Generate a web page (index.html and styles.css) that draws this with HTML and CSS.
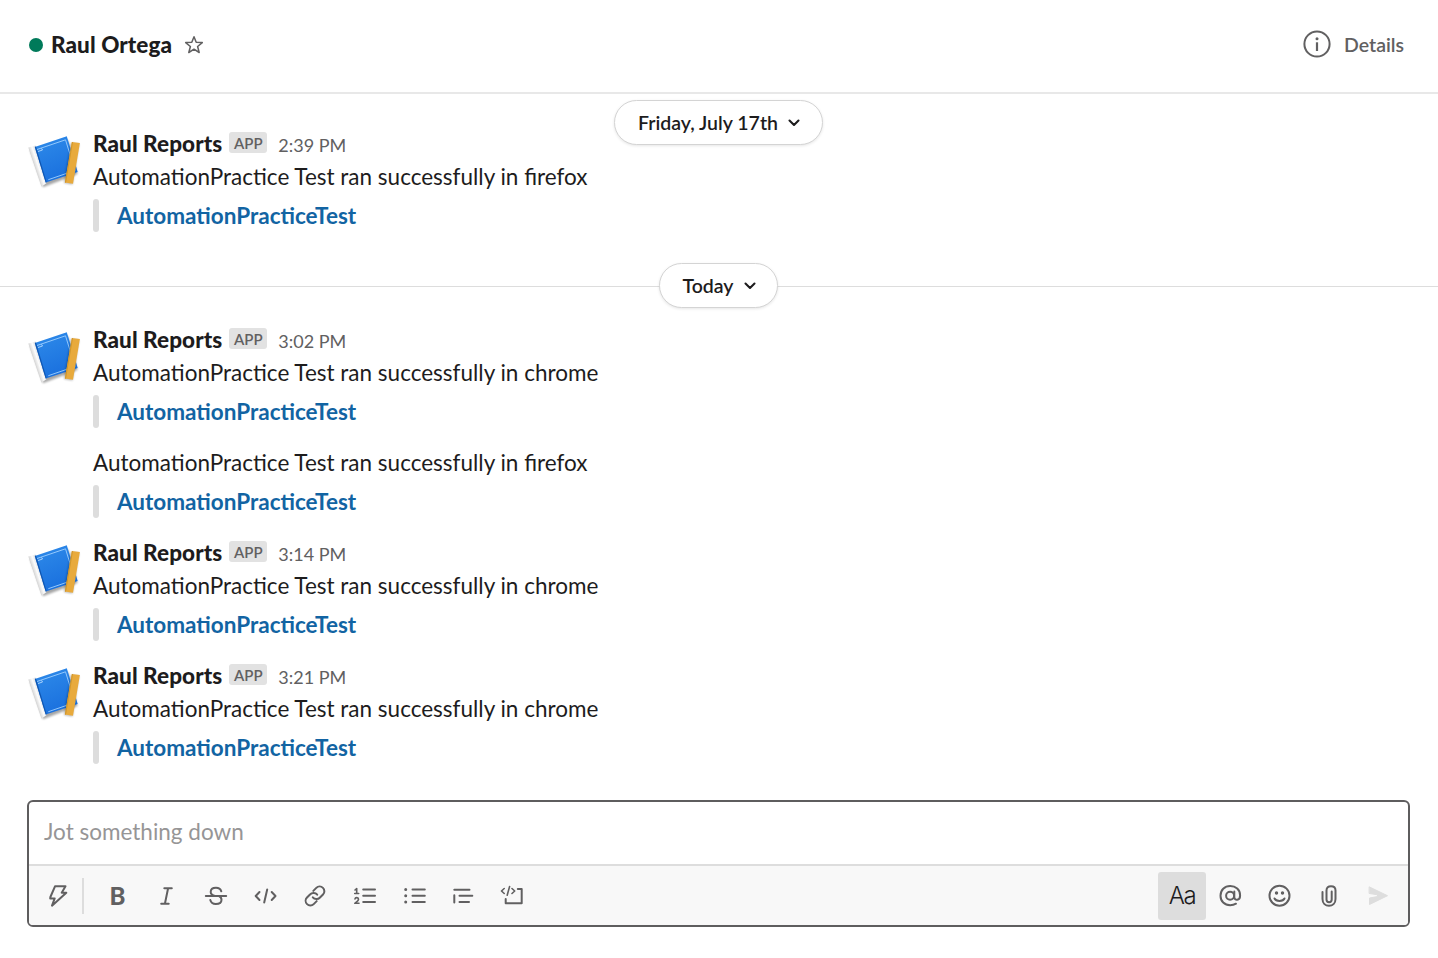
FILE: index.html
```html
<!DOCTYPE html>
<html lang="en">
<head>
<meta charset="utf-8">
<title>Raul Ortega</title>
<link rel="stylesheet" href="styles.css">
</head>
<body>
<svg class="defs" aria-hidden="true">
  <defs>
    <linearGradient id="cover" x1="0" y1="0" x2="0.4" y2="1"><stop offset="0" stop-color="#2f8cea"/><stop offset="1" stop-color="#1a70de"/></linearGradient>
    <linearGradient id="spine" gradientUnits="userSpaceOnUse" x1="33" y1="168" x2="42" y2="165"><stop offset="0" stop-color="#a8a8a8"/><stop offset=".3" stop-color="#dedede"/><stop offset=".6" stop-color="#fcfcfc"/><stop offset="1" stop-color="#d8dade"/></linearGradient>
    <filter id="soft" x="-20%" y="-20%" width="140%" height="140%"><feGaussianBlur stdDeviation=".8"/></filter>
    <symbol id="book" viewBox="27 135 54 54">
      <path d="M30 150L43 187.300L77.500 174L68 140Z" fill="#000" opacity=".35" filter="url(#soft)"/>
      <path d="M28.400 147.500L35.500 145.500L46.500 183.300L41.500 186.500Z" fill="url(#spine)"/>
      <path d="M34.800 147L66.800 136.300L77.700 172L45.700 182.600Z" fill="url(#cover)"/>
      <path d="M34.800 147L36 146.600L46.700 182.300L45.700 182.600Z" fill="#0f55b0"/>
      <path d="M37 149.500L65.500 139.800L75 170.500L48.300 179.700" fill="none" stroke="#9fd0ff" stroke-width=".9"/>
      <path d="M38 151.500L42.500 150L41.500 148.400" fill="none" stroke="#c4e2ff" stroke-width=".8"/>
      <path d="M71 143L79 144L72.500 184.500L64 183Z" fill="#000" opacity=".3" filter="url(#soft)"/>
      <path d="M71.800 138L79.900 139L73 179.800L64.900 178.500Z" fill="#e8aa3c" transform="translate(0 4)"/>
      <path d="M72 142L73 142.100L66 182.700L64.900 182.500Z" fill="#d0962c"/>
    </symbol>
    <symbol id="chevron" viewBox="0 0 12 8"><path d="M1.500 1.600L6 6L10.500 1.600" fill="none" stroke="#1d1c1d" stroke-width="2.100" stroke-linecap="round" stroke-linejoin="round"/></symbol>
  </defs>
</svg>

<header class="header">
  <span class="presence"></span>
  <h1 class="title">Raul Ortega</h1>
  <svg class="star" viewBox="0 0 20 20"><path d="M10 1.700L12.200 7.200L18.300 7.600L13.600 11.500L15.200 17.500L10 14.200L4.800 17.500L6.400 11.500L1.700 7.600L7.800 7.200Z" fill="none" stroke="#616061" stroke-width="1.500" stroke-linejoin="round"/></svg>
  <div class="details">
    <svg class="info" viewBox="0 0 28 28"><circle cx="14" cy="14" r="12.600" fill="none" stroke="#616061" stroke-width="2"/><circle cx="14" cy="8.800" r="1.500" fill="#616061"/><path d="M14 12.300V21" stroke="#616061" stroke-width="2.200"/></svg>
    <span>Details</span>
  </div>
</header>

<main class="feed">
  <div class="day day-pinned"><button class="pill pill-date">Friday, July 17th<svg class="chevron"><use href="#chevron"/></svg></button></div>
  <article class="message">
    <svg class="avatar"><use href="#book"/></svg>
    <div class="body">
      <div class="meta"><b class="name">Raul Reports</b><span class="badge">APP</span><time class="time">2:39 PM</time></div>
      <p class="text">AutomationPractice Test ran successfully in firefox</p>
      <div class="attachment"><a class="link">AutomationPracticeTest</a></div>
    </div>
  </article>
  <div class="day day-line"><button class="pill pill-today">Today<svg class="chevron"><use href="#chevron"/></svg></button></div>
  <article class="message">
    <svg class="avatar"><use href="#book"/></svg>
    <div class="body">
      <div class="meta"><b class="name">Raul Reports</b><span class="badge">APP</span><time class="time">3:02 PM</time></div>
      <p class="text">AutomationPractice Test ran successfully in chrome</p>
      <div class="attachment"><a class="link">AutomationPracticeTest</a></div>
    </div>
  </article>
  <article class="message follow">
    <div class="body">
      <p class="text">AutomationPractice Test ran successfully in firefox</p>
      <div class="attachment"><a class="link">AutomationPracticeTest</a></div>
    </div>
  </article>
  <article class="message">
    <svg class="avatar"><use href="#book"/></svg>
    <div class="body">
      <div class="meta"><b class="name">Raul Reports</b><span class="badge">APP</span><time class="time">3:14 PM</time></div>
      <p class="text">AutomationPractice Test ran successfully in chrome</p>
      <div class="attachment"><a class="link">AutomationPracticeTest</a></div>
    </div>
  </article>
  <article class="message">
    <svg class="avatar"><use href="#book"/></svg>
    <div class="body">
      <div class="meta"><b class="name">Raul Reports</b><span class="badge">APP</span><time class="time">3:21 PM</time></div>
      <p class="text">AutomationPractice Test ran successfully in chrome</p>
      <div class="attachment"><a class="link">AutomationPracticeTest</a></div>
    </div>
  </article>
</main>

<section class="composer">
  <div class="input">Jot something down</div>
  <div class="toolbar">
    <div class="tool"><svg class="icon" viewBox="-14 -14 28 28"><path d="M-3-9.700H7.500L3.700-3.300H8.300L-6 9.700L-3.300 2.400H-7.800L-7.600 1Z"/></svg></div>
    <span class="separator"></span>
    <div class="tools">
      <div class="tool bold">B</div>
      <div class="tool"><svg class="icon" viewBox="-14 -14 28 28"><path d="M-2.700-7.700H4.800M-5.800 7.700H1.700M1.100-7.700L-2.100 7.700"/></svg></div>
      <div class="tool"><svg class="icon" viewBox="-14 -14 28 28"><path d="M-10.200 0H10.200M5.300-4.700C4.500-7 2.500-8.200 0-8.200C-3.200-8.200-5.300-6.500-5.300-4C-5.300-2-3.800-.8-1 0M-5.700 4C-5 6.700-2.800 8-0.200 8C3.200 8 5.500 6.500 5.500 3.800C5.500 2 4.700 .8 3 0"/></svg></div>
      <div class="tool"><svg class="icon" viewBox="-14 -14 28 28"><path d="M-6.500-4L-10.300 0L-6.500 4M5.700-4L9.500 0L5.700 4M1.200-6.500L-1.800 6.500"/></svg></div>
      <div class="tool"><svg class="icon" viewBox="-2 -2 28 28"><path d="M9.800 13.300A4.700 4.700 0 0 0 17 13.500L20 10.500A4.700 4.700 0 0 0 13.300 3.900L10.300 6.900M14.200 10.700A4.700 4.700 0 0 0 7 10.500L4 13.500A4.700 4.700 0 0 0 10.700 20.100L13.700 17.100"/></svg></div>
      <div class="tool"><svg class="icon" viewBox="-14 -14 28 28"><path d="M-.8-6.500H11M-.8-.3H11M-.8 6H11"/><path class="fine" d="M-9-6L-7.300-7.500V-2.500M-9.300-2.500H-5.300M-9 2.900C-8.700 1.200-5.500 1.200-5.500 3.200C-5.500 4.600-7 5.600-9.200 7.300H-5"/></svg></div>
      <div class="tool"><svg class="icon" viewBox="-14 -14 28 28"><path d="M-1.500-6.500H10.800M-1.500-.3H10.800M-1.500 6H10.800"/><path class="dots" d="M-8.300-6.500H-8.290M-8.300-.3H-8.290M-8.300 6H-8.290"/></svg></div>
      <div class="tool"><svg class="icon" viewBox="-14 -14 28 28"><path d="M-8.700-6.200H6.500M-3.500-.3H9.300M-3.500 6H6M-8.700-.8V6.500"/></svg></div>
      <div class="tool"><svg class="icon" viewBox="-14 -14 28 28"><path d="M4.800-7H8.700V7.200H-7.300V3"/><path class="fine" d="M-8.800-7.500L-11.500-5L-8.800-2.500M-1-7.500L1.700-5L-1-2.500M-3.400-9.500L-5.800-.8"/></svg></div>
    </div>
    <div class="tools tools-right">
      <div class="tool active">Aa</div>
      <div class="tool"><svg class="icon" viewBox="-13.500 -14 28 28"><circle cx="-.4" cy="-.3" r="4"/><path d="M3.800-4.500V.9C3.800 5 9.600 4.700 9.600-.6C9.600-6.300 5.200-10-.3-10C-6-10-10-5.800-10-.3C-10 5.200-6 9.200-.3 9.200C1.800 9.200 3.800 8.700 5.500 7.700"/></svg></div>
      <div class="tool"><svg class="icon" viewBox="-13.500 -14 28 28"><circle cx="0" cy="-.3" r="10"/><path d="M-5 2.500C-3.500 5.700 3.500 5.700 5 2.500"/><path class="eyes" d="M-3-3H-2.990M3-3H3.010"/></svg></div>
      <div class="tool"><svg class="icon" viewBox="-14 -14 28 28"><path d="M-6.500-4V3C-6.500 7.500-3.500 9.800 0 9.800C3.500 9.800 6.500 7.500 6.500 3V-5.500C6.500-8.200 4.800-9.800 2-9.800C-.8-9.800-2.500-8.200-2.500-5.500V3.500C-2.500 5.200-1.500 6.200 .1 6.200C1.700 6.200 2.700 5.200 2.700 3.500V-4.500"/></svg></div>
      <div class="tool"><svg class="icon" viewBox="-14 -14 28 28"><path class="send" d="M-8.500-9L9.500-.3L-8.500 8.500V2L-.5 .6V-1.200L-8.500-2.500Z"/></svg></div>
    </div>
  </div>
</section>
</body>
</html>
```
FILE: styles.css
```css
* { box-sizing: border-box; }
body {
  margin: 0;
  width: 1438px;
  height: 958px;
  overflow: hidden;
  display: flex;
  flex-direction: column;
  background: #fff;
  color: #1d1c1d;
  font-family: Lato, "Liberation Sans", sans-serif;
  font-size: 22.5px;
  line-height: 33px;
}
.defs { position: absolute; width: 0; height: 0; }
.header {
  flex: none;
  height: 94px;
  padding: 0 34px 4px 29px;
  display: flex;
  align-items: center;
  border-bottom: 2px solid #e8e8e8;
}
.presence { width: 14px; height: 14px; margin-top: 1px; border-radius: 50%; background: #007a5a; }
.title { margin: 0 0 0 8px; font-size: 22.5px; font-weight: 900; letter-spacing: .08px; }
.star { width: 20px; height: 20px; margin: 2px 0 0 12px; }
.details { margin-left: auto; display: flex; align-items: center; gap: 13px; color: #616061; font-size: 19.5px; font-weight: 600; }
.info { width: 28px; height: 28px; margin-top: -1px; }

.feed { flex: none; height: 706px; }
.day { display: flex; justify-content: center; }
.day-pinned { height: 21px; padding: 6px 1px 0 0; }
.day-line {
  height: 73px;
  align-items: center;
  padding: 23px 1px 1px 0;
  background: linear-gradient(#ddd, #ddd) 0 48px / 100% 1px no-repeat;
}
.pill {
  flex: none;
  height: 45px;
  padding: 0 0 0 1px;
  display: flex;
  align-items: center;
  justify-content: center;
  gap: 10px;
  border: 1px solid #d4d4d4;
  border-radius: 23px;
  background: #fff;
  box-shadow: 0 1px 3px rgba(0, 0, 0, .1);
  color: #1d1c1d;
  font: 600 19.5px Lato, sans-serif;
}
.pill-date { width: 209px; }
.pill-today { width: 119px; }
.chevron { width: 12px; height: 8px; }

.message { display: flex; padding: 12px 27px 6px; gap: 12px; }
.avatar { flex: none; width: 54px; height: 54px; margin-top: 8px; }
.follow { padding-left: 93px; }
.meta { display: flex; align-items: center; height: 33px; }
.name { font-weight: 900; letter-spacing: .07px; }
.badge {
  width: 38px;
  height: 21px;
  margin: -2px 0 0 7px;
  border-radius: 3px;
  background: #e2e2e2;
  color: #616061;
  font-size: 15px;
  font-weight: 600;
  line-height: 23px;
  text-align: center;
}
.time { margin: 4px 0 0 11px; color: #616061; font-size: 18px; }
.text { margin: 0; white-space: nowrap; }
.attachment { margin-top: 6px; display: flex; gap: 18px; }
.attachment::before { content: ""; width: 6px; height: 33px; border-radius: 3px; background: #ddd; }
.link { color: #1264a3; font-weight: 700; }

.composer {
  flex: none;
  width: 1383px;
  height: 127px;
  margin-left: 27px;
  border: 2px solid #5e5d5e;
  border-radius: 6px;
  overflow: hidden;
}
.input { height: 62px; padding: 13px 15px; color: #969596; }
.toolbar {
  height: 61px;
  padding: 0 6px 0 5px;
  display: flex;
  align-items: center;
  border-top: 2px solid #ddd;
  background: #f8f8f8;
}
.tools { display: flex; gap: 1.4px; margin-left: 10px; }
.tools-right { margin-left: auto; gap: 1px; }
.tools-right .icon { margin-left: -1px; }
.tool { width: 48px; height: 48px; display: flex; align-items: center; justify-content: center; color: #616061; }
.separator { width: 1.5px; height: 36px; background: #ddd; }
.bold { font: 900 24px Lato, sans-serif; }
.active { border-radius: 3px; background: #ddd; color: #1d1c1d; font: 300 24px Inter, Roboto, sans-serif; letter-spacing: -1.5px; }
.icon { width: 28px; height: 28px; fill: none; stroke: #616061; stroke-width: 2; stroke-linecap: round; stroke-linejoin: round; }
.fine { stroke-width: 1.6; }
.dots { stroke-width: 3; }
.eyes { stroke-width: 3.4; }
.send { fill: #ddd; stroke: #ddd; stroke-width: 1; }
```
